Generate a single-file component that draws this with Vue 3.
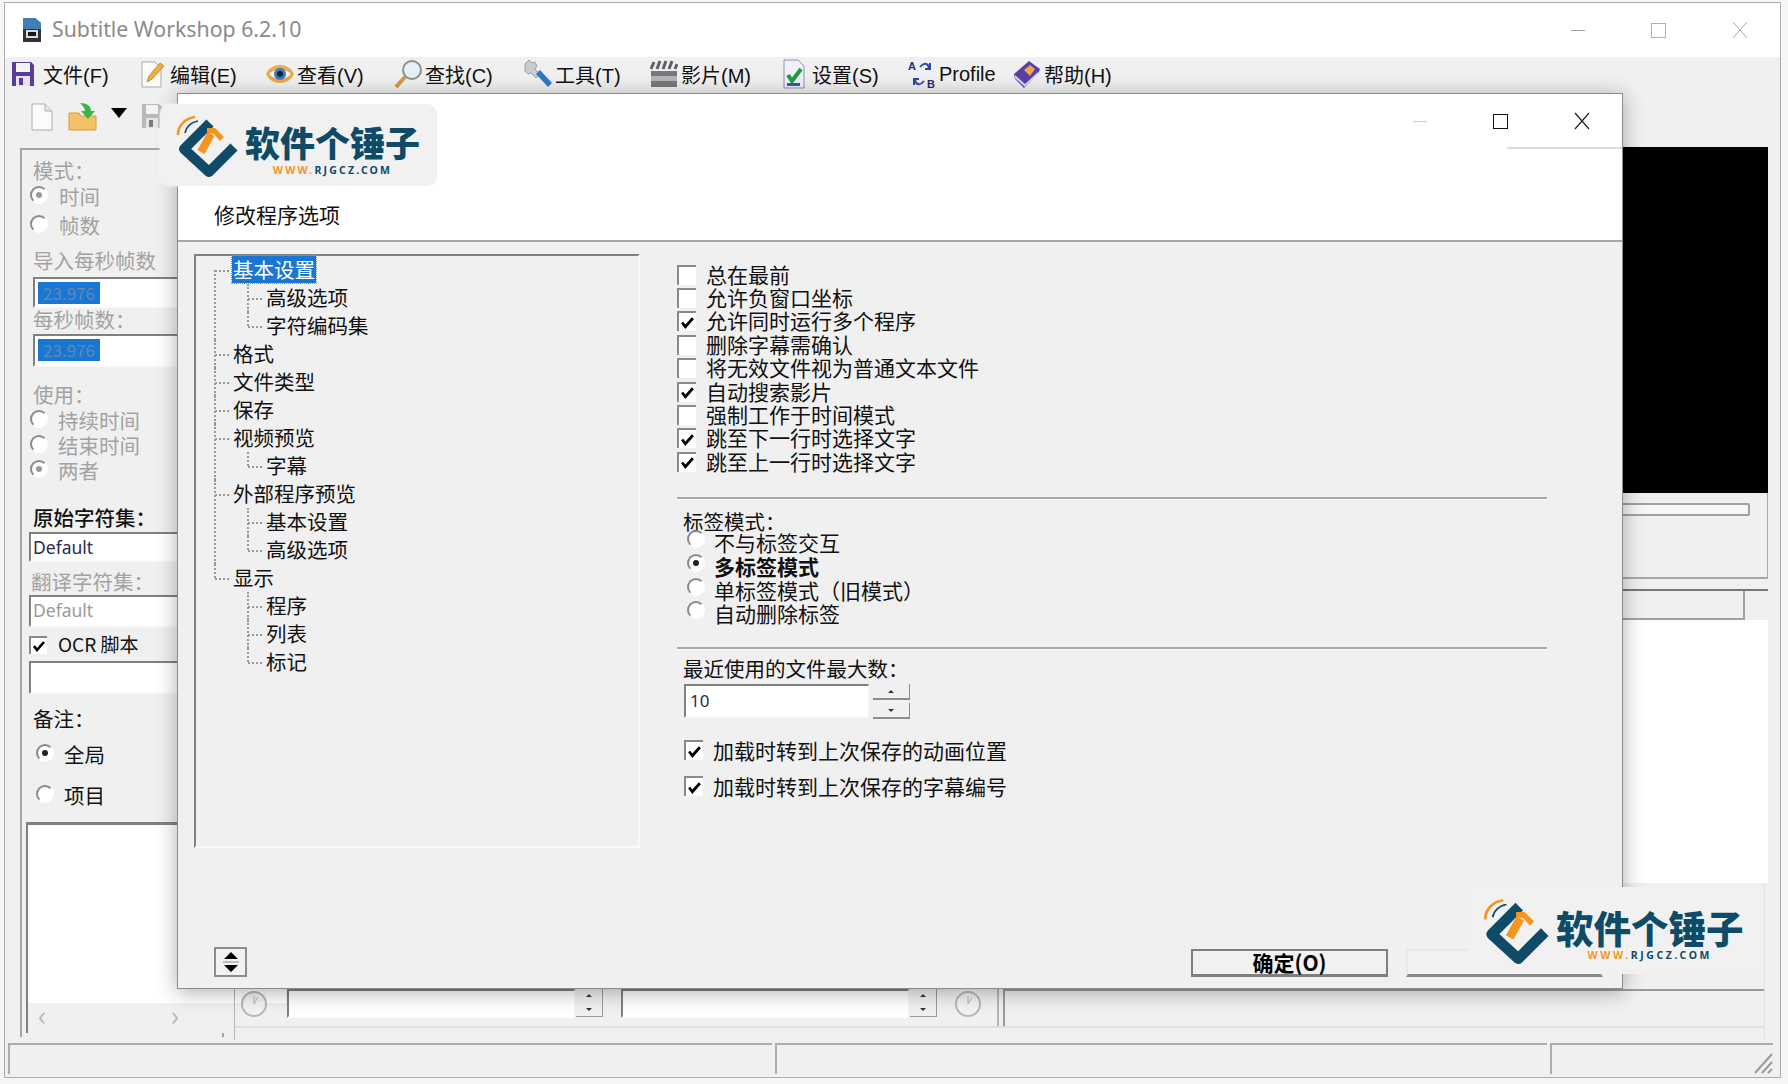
<script setup>
const menus = [
  { icon: 'save', label: '文件(F)', w: 127 },
  { icon: 'note', label: '编辑(E)', w: 127 },
  { icon: 'eye', label: '查看(V)', w: 128 },
  { icon: 'loupe', label: '查找(C)', w: 130 },
  { icon: 'wrench', label: '工具(T)', w: 126 },
  { icon: 'clap', label: '影片(M)', w: 131 },
  { icon: 'docok', label: '设置(S)', w: 127 },
  { icon: 'profile', label: 'Profile', w: 105 },
  { icon: 'book', label: '帮助(H)', w: 100 }
]
const tree = [
  { t: '基本设置', sel: true, c: ['高级选项', '字符编码集'] },
  { t: '格式' },
  { t: '文件类型' },
  { t: '保存' },
  { t: '视频预览', c: ['字幕'] },
  { t: '外部程序预览', c: ['基本设置', '高级选项'] },
  { t: '显示', c: ['程序', '列表', '标记'] }
]
const checks = [
  { t: '总在最前', on: false },
  { t: '允许负窗口坐标', on: false },
  { t: '允许同时运行多个程序', on: true },
  { t: '删除字幕需确认', on: false },
  { t: '将无效文件视为普通文本文件', on: false },
  { t: '自动搜索影片', on: true },
  { t: '强制工作于时间模式', on: false },
  { t: '跳至下一行时选择文字', on: true },
  { t: '跳至上一行时选择文字', on: true }
]
const tagModes = [
  { t: '不与标签交互' },
  { t: '多标签模式', on: true },
  { t: '单标签模式（旧模式）' },
  { t: '自动删除标签' }
]
const marks = ['wm-a', 'wm-b']
</script>

<template>
  <div class="desktop">
    <div class="window">
      <header class="titlebar">
        <svg class="app-icon" width="20" height="28" viewBox="0 0 20 26">
          <path d="M1 1h12l6 5v19H1z" fill="#2f3238" />
          <path d="M1 1h12l6 5v6H1z" fill="#3f7fb5" />
          <rect x="4" y="13" width="12" height="8" fill="#d8dade" />
          <rect x="6" y="15" width="8" height="4" fill="#16181c" />
        </svg>
        <span class="app-title">Subtitle Workshop 6.2.10</span>
        <div class="winctl">
          <span class="ctl"><i class="ctl-min"></i></span>
          <span class="ctl"><i class="ctl-max"></i></span>
          <span class="ctl"><svg width="18" height="18" viewBox="0 0 18 18"><path d="M2 1l14 16M16 1L2 17" stroke="#a8a8a8" fill="none" /></svg></span>
        </div>
      </header>

      <nav class="menubar">
        <div v-for="m in menus" :key="m.label" class="menu" :style="{ width: m.w + 'px' }">
          <span class="menu-icon">
            <svg v-if="m.icon === 'save'" class="shift-save" width="24" height="26" viewBox="0 0 24 26">
              <path d="M1 1h19l3 3v21H1z" fill="#5b3a9e" />
              <rect x="5" y="2" width="14" height="9" fill="#f4f4f4" />
              <rect x="5" y="15" width="14" height="10" fill="#e4e4e4" />
              <rect x="8" y="17" width="4" height="7" fill="#5b3a9e" />
            </svg>
            <svg v-else-if="m.icon === 'note'" width="24" height="28" viewBox="0 0 24 28">
              <path d="M1 2h13l6 6v19H1z" fill="#fbfbfb" stroke="#a9a9a9" />
              <path d="M6 22l2-6L19 3l4 3-12 13z" fill="#f0b040" stroke="#b97e20" stroke-width=".8" />
            </svg>
            <svg v-else-if="m.icon === 'eye'" width="30" height="26" viewBox="0 0 30 26">
              <path d="M1 13C6 1 24 1 29 13 24 25 6 25 1 13z" fill="#e9a94c" />
              <path d="M4 13C9 7 21 7 26 13 21 19 9 19 4 13z" fill="#f4f6fa" />
              <circle cx="15" cy="13" r="6" fill="#3a7cc0" />
              <circle cx="15" cy="13" r="3" fill="#10203a" />
            </svg>
            <svg v-else-if="m.icon === 'loupe'" width="30" height="30" viewBox="0 0 30 30">
              <circle cx="19" cy="11" r="9" fill="#e6eef6" stroke="#8a8f96" stroke-width="2" />
              <path d="M12 18L3 28" stroke="#d19a3c" stroke-width="4" />
            </svg>
            <svg v-else-if="m.icon === 'wrench'" width="32" height="32" viewBox="0 0 32 32">
              <path d="M3 6l4-4 3 3 3-1 2 4-2 3 5 5-4 4-5-5-3 1-3-3z" fill="#c9ccd2" stroke="#8d9096" stroke-width=".8" />
              <path d="M14 16l4-4 12 13-4 4z" fill="#2f78c8" />
            </svg>
            <svg v-else-if="m.icon === 'clap'" width="28" height="28" viewBox="0 0 28 28">
              <rect x="1" y="11" width="26" height="16" fill="#77797c" />
              <rect x="1" y="16" width="26" height="5" fill="#b5b6b8" />
              <path d="M1 9L4 2M7 9l3-8M13 9l3-8M19 9l3-8M25 9l2-5" stroke="#5e6063" stroke-width="3" />
            </svg>
            <svg v-else-if="m.icon === 'docok'" width="24" height="30" viewBox="0 0 24 30">
              <path d="M1 1h14l6 6v22H1z" fill="#eef1f7" stroke="#8b93b0" />
              <path d="M5 16l4 6 9-12" fill="none" stroke="#1f9b45" stroke-width="4" />
              <rect x="4" y="24" width="13" height="3" fill="#3b5aa8" />
            </svg>
            <svg v-else-if="m.icon === 'profile'" width="28" height="30" viewBox="0 0 28 30">
              <text x="0" y="11" class="ab">A</text>
              <text x="19" y="29" class="ab">B</text>
              <path d="M12 8c4-5 8-4 9 1M22 4v6h-5M16 22c-4 5-8 4-9-1M6 26v-6h5" fill="none" stroke="#2a4aa8" stroke-width="2" />
            </svg>
            <svg v-else width="30" height="30" viewBox="0 0 30 30">
              <path d="M2 15L17 2l11 8-2 5L12 29 3 20z" fill="#5a3fa8" />
              <path d="M12 11l6-5 5 4-5 7z" fill="#e9a84a" />
              <path d="M3 16l10 9 13-12v3L13 28 3 19z" fill="#d9d6ea" />
            </svg>
          </span>
          <span class="menu-text">{{ m.label }}</span>
        </div>
      </nav>

      <div class="toolbar">
        <svg width="22" height="28" viewBox="0 0 22 28"><path d="M1 1h13l7 7v19H1z" fill="#fbfbfb" stroke="#a7adb8" /><path d="M14 1v7h7" fill="#e6e8ec" stroke="#a7adb8" /></svg>
        <svg width="30" height="30" viewBox="0 0 30 30">
          <path d="M1 12h10l2 3h15v14H1z" fill="#f3c168" stroke="#d69a37" />
          <path d="M12 2c7 0 11 3 11 8h4l-7 8-7-8h4c0-3-2-5-5-8z" fill="#39b54a" />
        </svg>
        <svg class="tb-drop" width="16" height="10" viewBox="0 0 16 10"><path d="M0 0h16L8 10z" fill="#000" /></svg>
        <svg class="tb-save" width="22" height="26" viewBox="0 0 22 26"><path d="M1 1h17l3 3v21H1z" fill="#b9b9b9" /><rect x="5" y="2" width="12" height="9" fill="#f3f3f3" /><rect x="5" y="15" width="12" height="10" fill="#e5e5e5" /><rect x="8" y="17" width="4" height="7" fill="#7c7c7c" /></svg>
      </div>

      <div class="main">
        <aside class="left">
          <div class="lbl dim l-mode">模式：</div>
          <div class="opt o-time dim"><i class="radio on"></i><span>时间</span></div>
          <div class="opt o-time dim"><i class="radio"></i><span>帧数</span></div>
          <div class="lbl dim l-fps1">导入每秒帧数</div>
          <div class="sunken fps fps1"><span class="sel">23.976</span></div>
          <div class="lbl dim l-fps2">每秒帧数：</div>
          <div class="sunken fps fps2"><span class="sel">23.976</span></div>
          <div class="lbl dim l-use">使用：</div>
          <div class="opt o-use dim"><i class="radio"></i><span>持续时间</span></div>
          <div class="opt o-use dim"><i class="radio"></i><span>结束时间</span></div>
          <div class="opt o-use dim"><i class="radio on"></i><span>两者</span></div>
          <div class="lbl l-cs1">原始字符集：</div>
          <div class="sunken combo">Default</div>
          <div class="lbl dim l-cs2">翻译字符集：</div>
          <div class="sunken combo combo2 dim">Default</div>
          <div class="ocr"><i class="check"><svg width="14" height="12" viewBox="0 0 14 12"><path d="M2 6l3 4 7-8" fill="none" stroke="#000" stroke-width="2.6" /></svg></i><span class="ocr-text">OCR 脚本</span></div>
          <div class="sunken combo ocr-input"></div>
          <div class="lbl l-note">备注：</div>
          <div class="opt o-note"><i class="radio on"></i><span>全局</span></div>
          <div class="opt o-note"><i class="radio"></i><span>项目</span></div>
          <div class="sunken notes">
            <div class="notes-white"></div>
            <div class="hbar"><span>‹</span><span class="hbar-r">›</span></div>
          </div>
        </aside>

        <section class="content">
          <div class="video"></div>
          <div class="seek"><div class="seek-track"></div></div>
          <div class="tabs"><div class="tab"></div></div>
          <div class="sublist"></div>
          <div class="rest">
            <div class="edit-row">
              <svg class="clock" width="28" height="28" viewBox="0 0 28 28"><circle cx="14" cy="14" r="12" fill="#f3f3f3" stroke="#b8b8b8" stroke-width="2" /><path d="M14 14V6M14 14l4-7" stroke="#b8b8b8" /></svg>
              <div class="sunken time"></div>
              <div class="spin-s"><i class="arrow-up"></i><i class="arrow-down"></i></div>
              <div class="sunken time time2"></div>
              <div class="spin-s"><i class="arrow-up"></i><i class="arrow-down"></i></div>
              <svg class="clock clock2" width="28" height="28" viewBox="0 0 28 28"><circle cx="14" cy="14" r="12" fill="#f3f3f3" stroke="#b8b8b8" stroke-width="2" /><path d="M14 14V6M14 14l4-7" stroke="#b8b8b8" /></svg>
              <div class="edit-sep"></div>
              <div class="edit-box"></div>
            </div>
          </div>
        </section>
      </div>

      <footer class="status">
        <div class="cell c1"></div>
        <div class="cell c2"></div>
        <div class="cell c3">
          <svg width="20" height="22" viewBox="0 0 20 22"><path d="M2 21L19 2M9 21L19 10M15 21l4-4" stroke="#9a9a9a" stroke-width="2" fill="none" /></svg>
        </div>
      </footer>
    </div>

    <div class="dialog">
      <div class="dlg-head">
        <div class="dlg-ctl">
          <span class="ctl"><i class="ctl-min faint"></i></span>
          <span class="ctl"><i class="ctl-max dark"></i></span>
          <span class="ctl"><svg width="18" height="18" viewBox="0 0 18 18"><path d="M2 1l14 16M16 1L2 17" stroke="#222" stroke-width="1.2" fill="none" /></svg></span>
        </div>
        <div class="dlg-rule"></div>
        <div class="dlg-title">修改程序选项</div>
      </div>
      <div class="dlg-body">
        <div class="dlg-main">
          <div class="tree-box">
            <ul class="tree">
              <li v-for="n in tree" :key="n.t">
                <div class="row"><span class="node" :class="{ selected: n.sel }">{{ n.t }}</span></div>
                <ul v-if="n.c" class="sub">
                  <li v-for="s in n.c" :key="s"><div class="row"><span class="node">{{ s }}</span></div></li>
                </ul>
              </li>
            </ul>
          </div>
          <div class="options">
            <div class="checks">
              <div v-for="c in checks" :key="c.t" class="chk-row">
                <i class="check big"><svg v-if="c.on" width="15" height="13" viewBox="0 0 14 12"><path d="M2 6l3 4 7-8" fill="none" stroke="#000" stroke-width="2.6" /></svg></i>
                <span>{{ c.t }}</span>
              </div>
            </div>
            <div class="sep sep1"></div>
            <div class="ind lb-tag">标签模式：</div>
            <div class="tags">
              <div v-for="c in tagModes" :key="c.t" class="tag-row" :class="{ strong: c.on }">
                <i class="radio" :class="{ on: c.on }"></i><span>{{ c.t }}</span>
              </div>
            </div>
            <div class="sep sep2"></div>
            <div class="ind lb-rec">最近使用的文件最大数：</div>
            <div class="spinner">
              <div class="sunken spin-input">10</div>
              <div class="spin-btns">
                <div class="spin-btn"><i class="arrow-up"></i></div>
                <div class="spin-btn"><i class="arrow-down"></i></div>
              </div>
            </div>
            <div class="load-row first">
              <i class="check big"><svg width="15" height="13" viewBox="0 0 14 12"><path d="M2 6l3 4 7-8" fill="none" stroke="#000" stroke-width="2.6" /></svg></i>
              <span>加载时转到上次保存的动画位置</span>
            </div>
            <div class="load-row">
              <i class="check big"><svg width="15" height="13" viewBox="0 0 14 12"><path d="M2 6l3 4 7-8" fill="none" stroke="#000" stroke-width="2.6" /></svg></i>
              <span>加载时转到上次保存的字幕编号</span>
            </div>
          </div>
        </div>
        <div class="dlg-foot">
          <div class="updown">
            <svg width="16" height="22" viewBox="0 0 16 22"><path d="M8 1l7 7H1zM8 21l7-7H1z" fill="#000" /><path d="M0 11h16" stroke="#888" /></svg>
          </div>
          <button class="btn ok">确定(O)</button>
          <button class="btn"></button>
        </div>
      </div>
    </div>

    <div v-for="w in marks" :key="w" class="mark" :class="w">
      <svg class="mark-logo" viewBox="0 0 64 64">
        <path d="M4 22C4 12 12 5 21 4" fill="none" stroke="#f7941e" stroke-width="2.6" />
        <path d="M11 20C12 14 17 9 24 8" fill="none" stroke="#0f4a66" stroke-width="1.6" />
        <path d="M36 10L10 36 35 59 60 34" fill="none" stroke="#0f4a66" stroke-width="10" stroke-linejoin="round" />
        <path d="M27 39L37 21" stroke="#f7941e" stroke-width="8" />
        <path d="M33 15h8l9 9-4 4-6-7-7-1z" fill="#f7941e" />
      </svg>
      <div class="mark-text">
        <div class="mark-name">软件个锤子</div>
        <div class="mark-url"><span class="orange">WWW.</span>RJGCZ.COM</div>
      </div>
    </div>
  </div>
</template>

<style>
html, body { margin: 0; padding: 0; background: #f5f5f5; }
</style>

<style scoped>
.desktop { position: relative; width: 1788px; height: 1084px; overflow: hidden; background: #f6f6f6; font-family: "Noto Sans CJK SC", "Noto Sans", sans-serif; font-size: 20.5px; color: #111; }
i { display: block; font-style: normal; }
ul { list-style: none; margin: 0; padding: 0; }

.window { margin: 2px 0 0 4px; width: 1777px; height: 1076px; box-sizing: border-box; border: 1px solid #adadad; display: flex; flex-direction: column; background: #f0f0f0; }
.titlebar { height: 54px; flex: none; background: #fff; display: flex; align-items: center; padding-left: 17px; }
.app-title { margin-left: 10px; margin-top: -3px; font-family: "Noto Sans", sans-serif; font-size: 21.3px; color: #8a8a8a; }
.winctl, .dlg-ctl { display: flex; justify-content: flex-end; height: 54px; }
.winctl { margin-left: auto; }
.ctl { width: 81px; display: flex; align-items: center; justify-content: center; }
.ctl-min { width: 14px; height: 1px; background: #a0a0a0; }
.ctl-min.faint { background: #cfcfcf; }
.ctl-max { width: 13px; height: 13px; border: 1px solid #b0b0b0; }
.ctl-max.dark { border-color: #111; }

.menubar { height: 36px; flex: none; display: flex; align-items: center; padding: 0 0 2px 5px; box-sizing: border-box; background: #f0f0f0; }
.menu { display: flex; align-items: center; flex: none; }
.menu-icon { width: 33px; flex: none; display: flex; justify-content: center; padding-right: 1px; box-sizing: border-box; }
.shift-save { margin-left: -7px; }
.menu-text { font-family: "Liberation Sans", "Noto Sans CJK SC", sans-serif; font-size: 20px; white-space: nowrap; }
.ab { font: 700 11px "Liberation Sans", sans-serif; fill: #2a2a70; }

.toolbar { height: 52px; flex: none; display: flex; align-items: center; padding-left: 26px; padding-bottom: 6px; box-sizing: border-box; }
.toolbar svg { margin-right: 15px; }
.toolbar svg:first-child { margin-top: 2px; }
.tb-drop { margin-left: -2px; margin-right: 14px !important; margin-bottom: 7px; }

.main { height: 895px; flex: none; display: flex; padding: 0 12px 0 15px; }
.left { width: 200px; flex: none; margin-top: 3px; height: 887px; border: solid #a4a4a4; border-width: 2px 2px 0 2px; }
.dim { color: #a2a2a2; }
.lbl { height: 24px; line-height: 20px; margin-left: 11px; white-space: nowrap; }
.l-mode { margin-top: 10px; margin-bottom: -2px; }
.l-fps1 { margin-top: 10px; }
.l-fps2 { margin-top: 1px; }
.l-use { margin-top: 17px; }
.l-cs1 { margin-top: 24px; margin-bottom: 1px; font-weight: 500; }
.l-cs2 { margin-top: 9px; margin-bottom: 1px; margin-left: 9px; }
.l-note { margin-top: 14px; margin-bottom: 2px; }
.opt { display: flex; align-items: center; margin-left: 8px; white-space: nowrap; }
.opt span { margin-top: -2px; }
.o-time { height: 29px; gap: 11px; }
.o-use { height: 25px; gap: 10px; }
.o-note { height: 41px; gap: 10px; margin-left: 14px; }
.radio { width: 14px; height: 14px; flex: none; border-radius: 50%; border: 2px solid; border-color: #8a8a8a #fff #fff #8a8a8a; background: #fff; position: relative; transform: translateY(-2px); }
.radio.on::after { content: ""; position: absolute; left: 4px; top: 4px; width: 6px; height: 6px; border-radius: 50%; background: #222; }
.dim .radio.on::after { background: #9a9a9a; }
.sunken { box-sizing: border-box; background: #fff; border: solid; border-width: 2px 1px 2px 2px; border-color: #808080 #f4f4f4 #fbfbfb #808080; }
.fps { margin-left: 11px; padding: 3px; }
.fps1 { margin-top: 3px; height: 31px; }
.fps2 { margin-top: 1px; height: 33px; }
.sel { display: block; width: 62px; height: 22px; line-height: 22px; background: #1976d2; color: #5f8ab5; font-size: 17px; text-align: center; }
.combo { margin: 0 0 0 7px; height: 30px; line-height: 26px; padding-left: 2px; font-family: "Noto Sans", sans-serif; font-size: 17.5px; color: #2a2a55; }
.combo2 { margin-top: -1px; height: 32px; color: #9a9a9a; line-height: 26px; }
.ocr { display: flex; align-items: center; height: 22px; margin: 7px 0 0 7px; }
.ocr-text { margin-left: 11px; margin-top: -3px; font-size: 19px; }
.check { box-sizing: border-box; width: 18px; height: 18px; flex: none; background: #fff; border: solid; border-width: 2px 0 0 2px; border-color: #8a8a8a; display: flex; align-items: center; justify-content: center; }
.check.big { width: 19px; height: 20px; }
.ocr-input { margin-top: 5px; height: 33px; }
.o-note:first-of-type { margin-top: 4px; }
.notes { margin: 6px 0 0 4px; height: 211px; width: 260px; display: flex; flex-direction: column; border-width: 3px 0 0 2px; }
.notes-white { flex: 1; }
.hbar { height: 30px; background: #f0f0f0; display: flex; align-items: center; padding: 0 0 8px 10px; box-sizing: border-box; font-size: 28px; color: #b8b8b8; line-height: 1; }
.hbar-r { margin-left: 124px; }

.content { flex: 1; min-width: 0; margin-left: 10px; display: flex; flex-direction: column; border-left: 1px solid #b5b5b5; }
.video { height: 346px; width: 200px; margin-top: 2px; align-self: flex-end; background: #000; flex: none; }
.seek { height: 86px; width: 200px; flex: none; align-self: flex-end; box-sizing: border-box; border: solid #a8a8a8; border-width: 0 1px 2px 0; padding-top: 10px; }
.seek-track { height: 13px; margin-right: 17px; box-sizing: border-box; border: 2px solid #a0a0a0; background: #f6f6f6; border-radius: 2px; }
.tabs { margin-top: 10px; height: 31px; flex: none; box-sizing: border-box; border-top: 2px solid #777; }
.tab { height: 29px; margin-right: 23px; box-sizing: border-box; border: solid #a0a0a0; border-width: 0 2px 2px 0; }
.sublist { height: 263px; flex: none; background: #fff; }
.rest { flex: 1; display: flex; flex-direction: column; justify-content: flex-end; padding-bottom: 12px; margin-right: 3px; box-sizing: border-box; border-right: 1px solid #e2e2e2; }
.edit-row { height: 39px; display: flex; align-items: flex-start; padding-left: 5px; box-sizing: border-box; border-bottom: 2px solid #e0e0e0; }
.clock { flex: none; margin-top: 1px; }
.time { width: 288px; height: 29px; margin-left: 19px; border-bottom-color: #fff; }
.time2 { margin-left: 18px; }
.spin-s { width: 27px; height: 28px; flex: none; margin-left: 1px; box-sizing: border-box; border: solid #9a9a9a; border-width: 0 1px 1px 0; display: flex; flex-direction: column; align-items: center; justify-content: space-around; }
.clock2 { margin-left: 17px; }
.edit-sep { width: 2px; height: 37px; margin-left: 15px; background: #b5b5b5; flex: none; }
.edit-box { flex: 1; height: 37px; margin-left: 4px; box-sizing: border-box; border: solid #9a9a9a; border-width: 2px 0 0 2px; }

.status { height: 31px; flex: none; margin-top: 3px; display: flex; gap: 3px; padding: 0 0 0 3px; }
.cell { box-sizing: border-box; height: 31px; border: solid; border-width: 2px 0 0 2px; border-color: #adadad; }
.c1 { width: 764px; }
.c2 { width: 772px; }
.c3 { width: 223px; display: flex; justify-content: flex-end; align-items: flex-end; }

.dialog { position: absolute; left: 177px; top: 93px; width: 1446px; height: 896px; box-sizing: border-box; border: 1px solid #8c8c8c; background: #f0f0f0; display: flex; flex-direction: column; box-shadow: 0 3px 20px rgba(0, 0, 0, .32); }
.dlg-head { height: 146px; flex: none; background: #fff; border-bottom: 2px solid #a6a6a6; }
.dlg-rule { width: 115px; height: 2px; margin: -1px 0 0 auto; background: #dcdcdc; }
.dlg-title { margin: 50px 0 0 36px; height: 30px; line-height: 30px; font-size: 21px; }
.dlg-body { flex: 1; display: flex; flex-direction: column; min-height: 0; }
.dlg-main { height: 705px; display: flex; flex: none; }
.tree-box { width: 446px; height: 594px; margin: 12px 0 0 16px; flex: none; box-sizing: border-box; border: solid; border-width: 2px; border-color: #808080 #fafafa #fafafa #808080; }
.tree { padding: 0 0 0 18px; }
.tree li { position: relative; }
.tree li::before { content: ""; position: absolute; left: 0; top: 0; bottom: 0; border-left: 2px dotted #9a9a9a; }
.tree > li:first-child::before { top: 14px; }
.tree li:last-child::before { bottom: auto; height: 14px; }
.row { height: 28px; position: relative; padding-left: 18px; line-height: 28px; white-space: nowrap; }
.row::before { content: ""; position: absolute; left: 1px; top: 14px; width: 14px; border-top: 2px dotted #9a9a9a; }
.sub { margin-left: 33px; }
.node { display: inline-block; padding: 0 1px; height: 27px; line-height: 26px; vertical-align: top; }
.selected { background: #1976d2; color: #fff; outline: 1px dotted #d88a2a; }
.options { width: 870px; margin: 23px 0 0 37px; flex: none; }
.checks { display: grid; grid-auto-rows: 23.4px; }
.chk-row, .load-row { display: flex; align-items: center; white-space: nowrap; }
.chk-row span { margin-left: 10px; margin-top: -6px; font-size: 21px; }
.chk-row .check { transform: translateY(-2px); }
.sep { height: 2px; background: #a8a8a8; border-bottom: 1px solid #fff; }
.sep1 { margin-top: 21px; }
.sep2 { margin-top: 21px; }
.ind { margin-left: 6px; height: 24px; line-height: 22px; }
.lb-tag { margin-top: 10px; }
.lb-rec { margin-top: 7px; }
.tags { margin: -2px 0 0 10px; display: grid; grid-auto-rows: 23.7px; }
.tag-row { display: flex; align-items: center; white-space: nowrap; gap: 9px; font-size: 21px; }
.tag-row span { margin-top: -2px; }
.tag-row .radio { transform: translateY(-4px); }
.strong { font-weight: 700; }
.spinner { margin: 3px 0 0 7px; display: flex; align-items: flex-start; }
.spin-input { width: 185px; height: 34px; line-height: 30px; padding-left: 4px; font-family: "Noto Sans", sans-serif; font-size: 17px; color: #2a2a55; }
.spin-btns { margin-left: 4px; width: 37px; }
.spin-btn { height: 16px; margin-bottom: 3px; box-sizing: border-box; border: solid #8c8c8c; border-width: 0 1px 2px 0; display: flex; align-items: center; justify-content: center; }
.arrow-up { width: 0; height: 0; border: solid transparent; border-width: 0 3px 3px 3px; border-bottom-color: #333; }
.arrow-down { width: 0; height: 0; border: solid transparent; border-width: 3px 3px 0 3px; border-top-color: #333; }
.load-row { height: 30px; margin-left: 7px; }
.load-row span { margin-left: 10px; font-size: 21px; }
.load-row.first { margin-top: 13px; margin-bottom: 6px; }
.dlg-foot { display: flex; align-items: flex-end; padding: 0 19px 0 36px; }
.updown { width: 33px; height: 30px; box-sizing: border-box; border: 2px solid #8c8c8c; background: #f2f2f2; display: flex; align-items: center; justify-content: center; }
.btn { width: 197px; height: 28px; padding: 0 0 2px; box-sizing: border-box; background: #f1f1f1; border: solid; border-width: 2px 2px 3px 2px; border-color: #7f7f7f; font: 700 21px "Noto Sans CJK SC", sans-serif; line-height: 20px; color: #000; }
.btn.ok { margin-left: auto; margin-right: 18px; }
.btn:not(.ok) { border-color: #e8e8e8 #e8e8e8 #8a8a8a #e8e8e8; }

.mark { position: absolute; box-sizing: border-box; background: #f1f1f2; display: flex; align-items: flex-start; }
.wm-a { left: 160px; top: 104px; width: 277px; height: 82px; border-radius: 10px; padding: 9px 0 0 14px; --name: 35px; --logo: 64px; --sp: 2.2px; box-shadow: 0 0 3px rgba(255, 255, 255, .9); }
.wm-b { left: 1468px; top: 887px; width: 292px; height: 87px; padding: 9px 0 0 13px; --name: 37.5px; --logo: 68px; --sp: 2.6px; }
.mark-logo { width: var(--logo); height: var(--logo); flex: none; }
.mark-text { margin-left: 7px; display: flex; flex-direction: column; align-items: center; padding-top: 10px; }
.mark-name { font-size: var(--name); line-height: 1.1; font-weight: 900; color: #0f4a66; white-space: nowrap; }
.mark-url { margin-top: 1px; font: 700 10.5px "Noto Sans", sans-serif; letter-spacing: var(--sp); color: #0f4a66; white-space: nowrap; line-height: 14px; }
.orange { color: #f7941e; }
</style>
